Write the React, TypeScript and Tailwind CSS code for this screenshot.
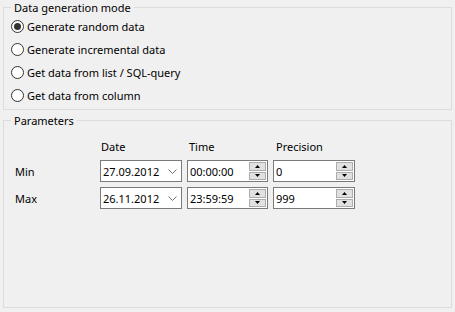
import React from 'react';

const modes = [
    'Generate random data',
    'Generate incremental data',
    'Get data from list / SQL-query',
    'Get data from column',
];

const Radio = ({ checked, label }: { checked?: boolean; label: string }) => (
    <div className="flex items-center h-[23px]">
        <span className="w-[13px] h-[13px] rounded-full border border-[#333333] bg-white flex items-center justify-center">
            {checked && <span className="w-[7px] h-[7px] rounded-full bg-[#333333]" />}
        </span>
        <span className="ml-[3px]">{label}</span>
    </div>
);

const SpinButtons = () => (
    <div className="flex flex-col gap-[1px] my-[1px] mr-[1px]">
        <div className="w-[17px] h-[9px] bg-[#e1e1e1] border border-[#adadad] flex items-center justify-center">
            <svg width="5" height="3" viewBox="0 0 5 3"><path d="M2.5 0 L5 3 L0 3 Z" fill="#000" /></svg>
        </div>
        <div className="w-[17px] h-[9px] bg-[#e1e1e1] border border-[#adadad] flex items-center justify-center">
            <svg width="5" height="3" viewBox="0 0 5 3"><path d="M0 0 L5 0 L2.5 3 Z" fill="#000" /></svg>
        </div>
    </div>
);

const DateBox = ({ value }: { value: string }) => (
    <div className="w-[82px] h-[22px] border border-[#7a7a7a] bg-white flex items-center">
        <span className="pl-[2px] flex-1">{value}</span>
        <svg width="9" height="5" viewBox="0 0 9 5" className="mr-[4px]">
            <polyline points="0.5,0.5 4.5,4.5 8.5,0.5" fill="none" stroke="#707070" strokeWidth="1" />
        </svg>
    </div>
);

const SpinBox = ({ value, w }: { value: string; w: string }) => (
    <div className={`${w} h-[22px] border border-[#7a7a7a] bg-white flex items-stretch`}>
        <span className="pl-[2px] flex-1 flex items-center">{value}</span>
        <SpinButtons />
    </div>
);

export default function App() {
    return (
        <div className="w-[455px] h-[312px] bg-[#f0f0f0] px-[3px] text-[11px] leading-[15px] text-black font-['Noto_Sans',sans-serif]">
            {/* Data generation mode */}
            <fieldset className="h-[110px] border border-[#dcdcdc] pl-[7px]">
                <legend className="px-[3px]">Data generation mode</legend>
                {modes.map((m, i) => (
                    <Radio key={m} label={m} checked={i === 0} />
                ))}
            </fieldset>

            {/* Parameters */}
            <fieldset className="mt-[3px] h-[195px] border border-[#dcdcdc] pl-[7px]">
                <legend className="px-[3px]">Parameters</legend>
                <div className="grid grid-cols-[84px_82px_81px_82px] gap-x-[5px] mt-[10px]">
                    <div />
                    <div className="pl-[1px] h-[16px] flex items-center">Date</div>
                    <div className="pl-[2px] h-[16px] flex items-center">Time</div>
                    <div className="pl-[3px] h-[16px] flex items-center">Precision</div>
                </div>
                <div className="grid grid-cols-[84px_82px_81px_82px] gap-x-[5px] gap-y-[5px] mt-[6px]">
                    <div className="pl-[4px] flex items-center">Min</div>
                    <DateBox value="27.09.2012" />
                    <SpinBox value="00:00:00" w="w-[81px]" />
                    <SpinBox value="0" w="w-[82px]" />
                    <div className="pl-[4px] flex items-center">Max</div>
                    <DateBox value="26.11.2012" />
                    <SpinBox value="23:59:59" w="w-[81px]" />
                    <SpinBox value="999" w="w-[82px]" />
                </div>
            </fieldset>
        </div>
    );
}
